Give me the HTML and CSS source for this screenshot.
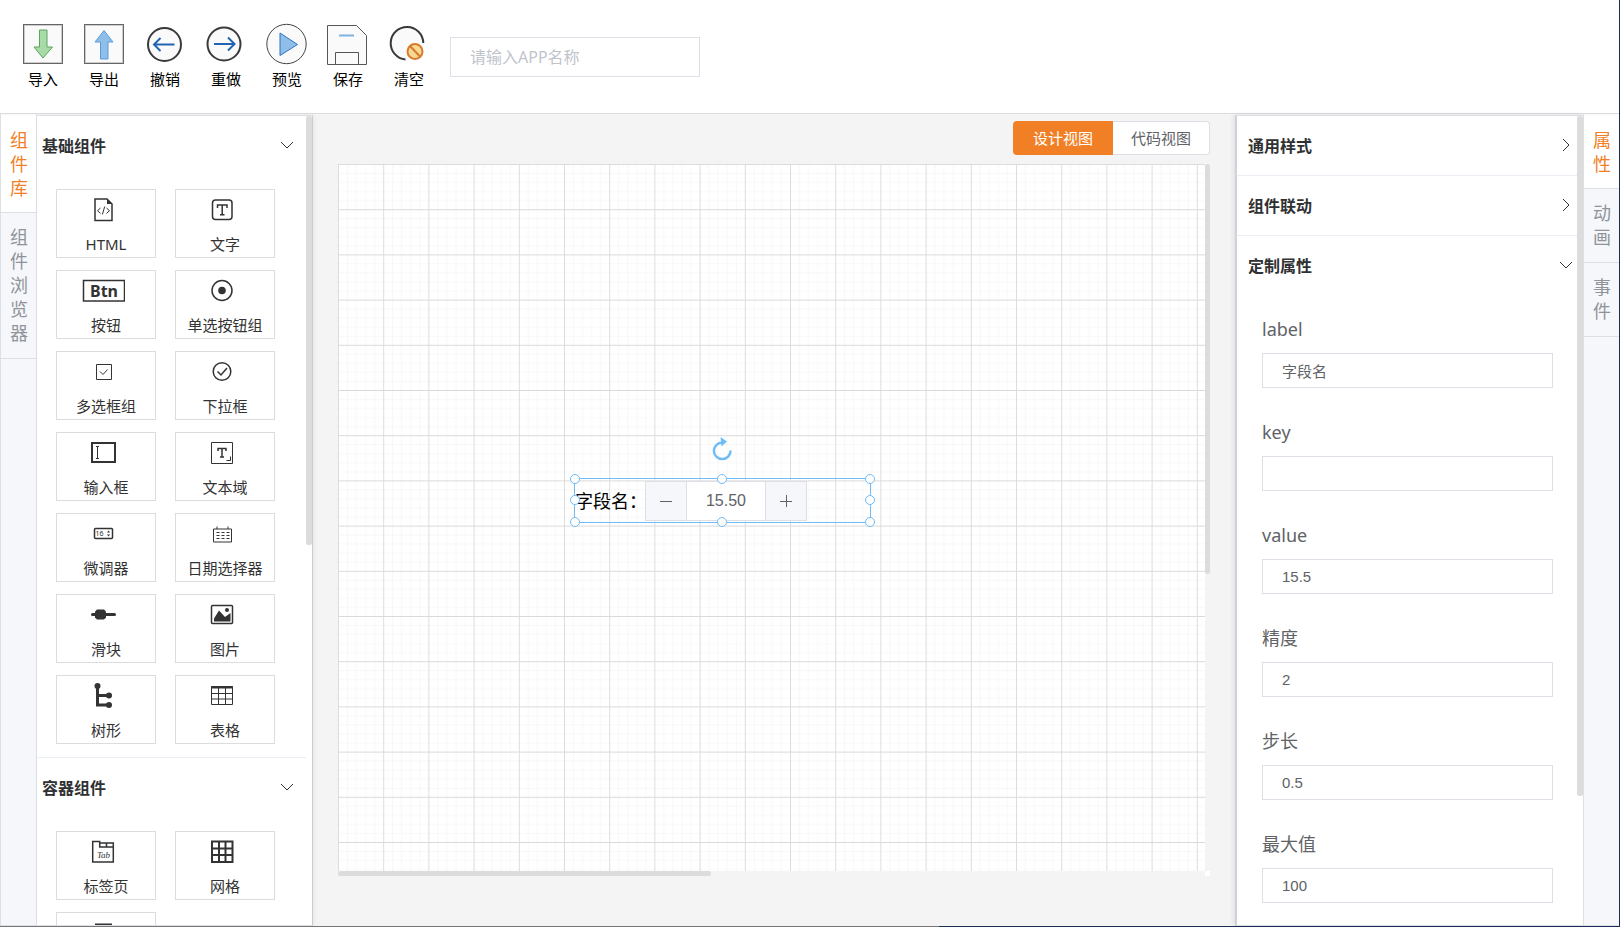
FILE: index.html
```html
<!DOCTYPE html>
<html lang="zh-CN">
<head>
<meta charset="utf-8">
<title>设计器</title>
<link rel="stylesheet" href="styles.css">
</head>
<body>
<div class="app">
  <header class="topbar">
    <nav class="tools">
      <button class="tool"><svg viewBox="0 0 42 42"><rect x="1.500" y="1.500" width="39" height="39" fill="#fafafa" stroke="#666"/><rect x="2.500" y="2.500" width="37" height="37" fill="none" stroke="#ccc"/><path d="M17.500 7h7.500v17h5.500L21 35l-9-11h5.500z" fill="#a9dba9" stroke="#58a75c"/></svg>导入</button>
      <button class="tool"><svg viewBox="0 0 42 42"><rect x="1.500" y="1.500" width="39" height="39" fill="#fafafa" stroke="#666"/><rect x="2.500" y="2.500" width="37" height="37" fill="none" stroke="#ccc"/><path d="M17.500 36h7.500V19h5L21 7.500 12 19h5.500z" fill="#8fbfe8" stroke="#5b9bd9"/></svg>导出</button>
      <button class="tool"><svg viewBox="0 0 42 42"><circle cx="20.500" cy="21.500" r="16.500" fill="#fafafa" stroke="#3a3a3a" stroke-width="2"/><path d="M30.500 21.500h-20M16.500 15L10 21.500l6.500 6.500" fill="none" stroke="#2264b4" stroke-width="2"/></svg>撤销</button>
      <button class="tool"><svg viewBox="0 0 42 42"><circle cx="19" cy="21" r="16.500" fill="#fafafa" stroke="#3a3a3a" stroke-width="2"/><path d="M9 21h20M23 14.500l6.500 6.500-6.500 6.500" fill="none" stroke="#2264b4" stroke-width="2"/></svg>重做</button>
      <button class="tool"><svg viewBox="0 0 42 42"><circle cx="20.500" cy="21" r="19.700" fill="#fafafa" stroke="#444"/><path d="M14 10v22.500L31.500 21.500z" fill="#8fbfe8" stroke="#2f73bd"/></svg>预览</button>
      <button class="tool"><svg viewBox="0 0 42 42"><path d="M.5 2.500h29l10 10v29H.5z" fill="#fafafa" stroke="#555"/><path d="M12 12.500h15" stroke="#7fb2e0" stroke-width="2"/><path d="M8.500 41V29.500h23V41" fill="none" stroke="#555"/></svg>保存</button>
      <button class="tool"><svg viewBox="0 0 42 42"><path d="M17.500 36.500A16.300 16.300 0 1 1 35.300 20" fill="#fafafa" stroke="#3a3a3a" stroke-width="2"/><circle cx="27" cy="28.500" r="9.500" fill="#fff"/><circle cx="27" cy="28.500" r="7.500" fill="#f6da94" stroke="#d97a2b" stroke-width="2"/><path d="M22 23l10.500 11" stroke="#d97a2b" stroke-width="2"/></svg>清空</button>
    </nav>
    <input class="app-name" type="text" placeholder="请输入APP名称" aria-label="APP名称">
  </header>

  <main class="workspace">
    <div class="rail rail-left">
      <button class="rail-tab active">组件库</button>
      <button class="rail-tab">组件浏览器</button>
    </div>

    <aside class="panel panel-left">
      <div class="panel-body">
        <section class="group">
          <button class="group-head">基础组件<svg class="chev" viewBox="0 0 14 14"><path d="M1 4l6 6 6-6"/></svg></button>
          <div class="cards">
            <button class="card"><svg viewBox="0 0 44 28"><path d="M14 3h12l5 5v16.500H14z"/><path d="M26 3v5h5z" class="f"/><path d="M19.500 12l-3 2.700 3 2.700M25.500 12l3 2.700-3 2.700M23.700 10.500l-2.300 8" class="thin"/></svg>HTML</button>
            <button class="card"><svg viewBox="0 0 44 28"><rect x="12.500" y="4" width="19.500" height="19.500" rx="3"/><path d="M17.500 12V9h9.500v3M22.200 9v9.500M20 18.700h4.500"/></svg>文字</button>
            <button class="card"><svg viewBox="0 0 44 28"><rect x="2.500" y="3.500" width="41" height="20.500"/><text x="23" y="19.500" class="btn-text">Btn</text></svg>按钮</button>
            <button class="card"><svg viewBox="0 0 44 28"><circle cx="22" cy="13.500" r="10"/><circle cx="22" cy="13.500" r="3.800" class="f"/></svg>单选按钮组</button>
            <button class="card"><svg viewBox="0 0 44 28"><path d="M15.500 6.500h15v15h-15z" class="thin"/><path d="M19 13.500l3 3 4.500-5" class="thin"/></svg>多选框组</button>
            <button class="card"><svg viewBox="0 0 44 28"><circle cx="22" cy="13.500" r="8.800"/><path d="M17.500 13.500l3.500 3.500 6-7"/></svg>下拉框</button>
            <button class="card"><svg viewBox="0 0 44 28"><rect x="11" y="4" width="23" height="19" class="bold"/><path d="M15 7.500h3M16.500 7.500v12M15 19.500h3" class="thin"/></svg>输入框</button>
            <button class="card"><svg viewBox="0 0 44 28"><path d="M11.500 3.500h21v21h-21z" class="thin"/><path d="M18 12V9.500h8V12M22 9.500V18M20 18h4"/><path d="M30.500 17.500v4h-4" class="thin"/></svg>文本域</button>
            <button class="card"><svg viewBox="0 0 44 28"><rect x="13.500" y="8.500" width="18" height="10" rx="1"/><text x="18.500" y="16" class="tiny-text">16</text><path d="M26 12.500l1.500-2 1.500 2zM26 14.500l1.500 2 1.500-2z" class="f"/></svg>微调器</button>
            <button class="card"><svg viewBox="0 0 44 28"><path d="M13.500 9h18v13h-18zM17 6.500V9M28 6.500V9" class="thin"/><path d="M16.500 12.500h3m2 0h3m2 0h3M16.500 15.500h3m2 0h3m2 0h3M16.500 18.500h3m2 0h3m2 0h3" class="thin"/></svg>日期选择器</button>
            <button class="card"><svg viewBox="0 0 44 28"><path d="M11.500 13.500h22" class="thick"/><path d="M16 8.500h7l2 2v6l-2 2h-7l-2-2v-6z" class="f"/></svg>滑块</button>
            <button class="card"><svg viewBox="0 0 44 28"><rect x="11.500" y="4.500" width="21" height="18" rx="1"/><path d="M14 20.500v-3l5-8 6 6.500 5.500-4v8.500z" class="f"/><circle cx="27" cy="9" r="2" class="f"/></svg>图片</button>
            <button class="card"><svg viewBox="0 0 44 28"><path d="M16.500 4v19h11M16.500 13.500h11" class="thick"/><circle cx="16.500" cy="4" r="3" class="f"/><circle cx="28" cy="13.500" r="3" class="f"/><circle cx="28" cy="23" r="3" class="f"/></svg>树形</button>
            <button class="card"><svg viewBox="0 0 44 28"><path d="M11.500 4.500h21v18h-21zM11.500 11.500h21M11.500 17h21M18.500 5v17.500M25.500 5v17.500" class="thin"/><path d="M11 5.500h22" class="bold"/></svg>表格</button>
          </div>
        </section>
        <section class="group">
          <button class="group-head">容器组件<svg class="chev" viewBox="0 0 14 14"><path d="M1 4l6 6 6-6"/></svg></button>
          <div class="cards">
            <button class="card"><svg viewBox="0 0 44 28"><path d="M11.700 24V3.500h7V9h13.600v15zM18.500 5h13.800v4M25.500 5v4"/><text x="22.500" y="20" class="tab-text">Tab</text></svg>标签页</button>
            <button class="card"><svg viewBox="0 0 44 28"><path d="M12 3.500h20.500V24H12zM12 10.500h20.500M12 17h20.500M19 3.500V24M25.500 3.500V24" class="bold"/></svg>网格</button>
            <button class="card" aria-label="卡片"><svg viewBox="0 0 44 28"><path d="M15 5.500h15v16H15z" class="bold"/></svg></button>
          </div>
        </section>
      </div>
      <div class="scroll"><div class="thumb thumb-left"></div></div>
    </aside>

    <section class="stage">
      <div class="views">
        <button class="view active">设计视图</button>
        <button class="view">代码视图</button>
      </div>
      <div class="canvas">
        <div class="board">
          <svg class="grid" width="100%" height="100%">
            <defs>
              <pattern id="minor" width="10" height="10" patternUnits="userSpaceOnUse"><path d="M10 0H0v10" fill="none" stroke="#efefef" stroke-width="1"/></pattern>
              <pattern id="major" width="50" height="50" patternUnits="userSpaceOnUse" patternTransform="scale(.904)"><rect width="50" height="50" fill="url(#minor)"/><path d="M50 0H0v50" fill="none" stroke="#dadada" stroke-width="2"/></pattern>
            </defs>
            <rect width="100%" height="100%" fill="url(#major)"/>
          </svg>
          <div class="node">
            <label class="node-label" for="num">字段名：</label>
            <div class="stepper">
              <button aria-label="减少"><svg viewBox="0 0 14 14"><path d="M1 7.500h12"/></svg></button>
              <input id="num" type="text" value="15.50">
              <button aria-label="增加"><svg viewBox="0 0 14 14"><path d="M1 7.500h12M7.500 1v12"/></svg></button>
            </div>
            <svg class="rotate" viewBox="0 0 22 26"><path d="M11.500 6.500A8.300 8.300 0 1 0 19.500 14.500" fill="none" stroke="#6fbcf7" stroke-width="2.500"/><path d="M9.500 1l6.500 4.500-5.500 5z" fill="#6fbcf7"/></svg>
            <i class="handle t l"></i><i class="handle t c"></i><i class="handle t r"></i>
            <i class="handle m l"></i><i class="handle m r"></i>
            <i class="handle b l"></i><i class="handle b c"></i><i class="handle b r"></i>
          </div>
        </div>
        <div class="vbar"><div class="thumb thumb-v"></div></div>
        <div class="hbar"><div class="thumb thumb-h"></div></div>
        <div class="corner"></div>
      </div>
    </section>

    <aside class="panel panel-right">
      <div class="panel-body">
        <section class="group"><button class="group-head">通用样式<svg class="chev" viewBox="0 0 14 14"><path d="M4 1l6 6-6 6"/></svg></button></section>
        <section class="group"><button class="group-head">组件联动<svg class="chev" viewBox="0 0 14 14"><path d="M4 1l6 6-6 6"/></svg></button></section>
        <section class="group">
          <button class="group-head">定制属性<svg class="chev" viewBox="0 0 14 14"><path d="M1 4l6 6 6-6"/></svg></button>
          <form class="fields">
            <div class="field"><label for="f1">label</label><input id="f1" type="text" value="字段名"></div>
            <div class="field"><label for="f2">key</label><input id="f2" type="text"></div>
            <div class="field"><label for="f3">value</label><input id="f3" type="text" value="15.5"></div>
            <div class="field"><label for="f4">精度</label><input id="f4" type="text" value="2"></div>
            <div class="field"><label for="f5">步长</label><input id="f5" type="text" value="0.5"></div>
            <div class="field"><label for="f6">最大值</label><input id="f6" type="text" value="100"></div>
          </form>
        </section>
      </div>
      <div class="scroll"><div class="thumb thumb-right"></div></div>
    </aside>

    <div class="rail rail-right">
      <button class="rail-tab active">属性</button>
      <button class="rail-tab">动画</button>
      <button class="rail-tab">事件</button>
    </div>
  </main>
</div>
</body>
</html>
```
FILE: styles.css
```css
* { box-sizing: border-box; }
body {
  margin: 0;
  font-family: "Noto Sans", "Noto Sans CJK SC", sans-serif;
  color: #303133;
  background: #fff;
}
button { font: inherit; color: inherit; background: none; border: 0; padding: 0; cursor: pointer; }
input { font-family: "Liberation Sans", "Noto Sans CJK SC", sans-serif; outline: 0; }

.app {
  height: 100vh;
  display: flex;
  flex-direction: column;
  overflow: hidden;
  border-right: 1px solid #1b2d52;
}
.app::after {
  content: "";
  flex: none;
  height: 1px;
  background: linear-gradient(90deg, #777 58%, #1b2d52 58%);
}

.topbar {
  flex: none;
  display: flex;
  height: 114px;
  padding-left: 22px;
  border-bottom: 1px solid #dcdcdc;
}
.tools { display: flex; gap: 19px; padding-top: 23px; }
.tool {
  display: flex;
  flex-direction: column;
  align-items: center;
  align-self: flex-start;
  gap: 2px;
  width: 42px;
  font-size: 15px;
  line-height: 24px;
  color: #000;
}
.tool svg { width: 42px; height: 42px; }
.app-name {
  width: 250px;
  height: 40px;
  margin: 37px 0 0 20px;
  padding: 0 19px;
  border: 1px solid #dcdfe6;
  font-family: "Noto Sans", "Noto Sans CJK SC", sans-serif;
  font-size: 16px;
}
.app-name::placeholder { color: #c0c4cc; }

.workspace { flex: 1; min-height: 0; display: flex; background: #f4f4f4; }

.rail {
  flex: none;
  width: 37px;
  padding-top: 1px;
  background: #f5f7fa;
  border: solid #dcdfe6;
  border-width: 0 1px 1px;
}
.rail-right { width: 36px; border-right: 0; }
.rail-tab {
  display: block;
  width: 100%;
  padding: 12px 8px 13px 9px;
  border-bottom: 1px solid #dcdfe6;
  font-size: 18px;
  line-height: 24px;
  text-align: left;
  color: #909399;
}
.rail-tab.active { padding-top: 13px; padding-bottom: 12px; background: #fff; color: #f17f26; }

.panel {
  flex: none;
  display: flex;
  background: #fff;
  border-top: 1px solid #dcdfe6;
  border-bottom: 1px solid #dcdfe6;
  margin-top: 1px;
}
.panel-left { width: 276px; border-right: 1px solid #ccc; box-shadow: 2px 0 4px rgba(0,0,0,.04); }
.panel-right { width: 348px; border-left: 2px solid #d0d2da; box-shadow: -2px 0 5px rgba(0,0,0,.08); }
.panel-body { flex: 1; min-width: 0; overflow: hidden; }
.scroll { flex: none; width: 6px; }
.thumb { background: #dcdcdc; border-radius: 2px; }
.thumb-left { height: 53%; }
.thumb-right { height: 84%; }

.group { border-bottom: 1px solid #ebeef5; }
.group:last-child { border-bottom: 0; }
.group-head {
  display: flex;
  width: 100%;
  height: 59px;
  align-items: center;
  justify-content: space-between;
  padding: 0 12px 2px 5px;
  font-size: 16px;
  font-weight: 700;
}
.panel-right .group-head { padding: 0 4px 2px 11px; }
.chev { width: 14px; height: 14px; fill: none; stroke: #303133; stroke-width: 1; }

.cards {
  display: grid;
  grid-template-columns: 100px 100px;
  gap: 12px 19px;
  padding: 14px 0 13px 19px;
}
.card {
  display: flex;
  flex-direction: column;
  align-items: center;
  gap: 8px;
  height: 69px;
  padding-top: 6px;
  border: 1px solid #dcdcdc;
  font-size: 15px;
  line-height: 24px;
  color: #333;
}
.card svg {
  flex: none;
  width: 44px;
  height: 28px;
  margin-right: 6px;
  fill: none;
  stroke: #333;
  stroke-width: 1.5;
}
.card .thin { stroke-width: 1; }
.card .bold { stroke-width: 2; }
.card .thick { stroke-width: 3; stroke-linecap: round; }
.card .f { fill: #333; stroke: none; }
.card text { fill: #333; stroke: none; text-anchor: middle; }
.btn-text { font-size: 16px; font-weight: 700; }
.tiny-text { font-size: 7px; }
.tab-text { font: italic 9px "Liberation Serif", serif; }

.stage {
  flex: 1;
  min-width: 0;
  display: flex;
  flex-direction: column;
  padding: 7px 25px 50px;
}
.views { display: flex; justify-content: flex-end; margin-bottom: 9px; }
.view {
  height: 34px;
  padding: 0 18px 2px;
  background: #fff;
  border: 1px solid #dcdfe6;
  border-left: 0;
  border-radius: 0 4px 4px 0;
  font-size: 15px;
  color: #606266;
}
.view.active {
  padding: 0 20px 2px;
  background: #f17f26;
  border: 0;
  border-radius: 4px 0 0 4px;
  color: #fff;
}
.canvas {
  flex: 1;
  min-height: 0;
  display: grid;
  grid-template: 1fr 5px / 1fr 5px;
}
.board {
  position: relative;
  overflow: hidden;
  background: #fff;
  border-left: 1px solid #dcdcdc;
  border-top: 1px solid #dcdcdc;
}
.grid { display: block; margin: -1px; width: calc(100% + 1px); height: calc(100% + 1px); }
.thumb-v { height: 58%; }
.thumb-h { width: 43%; height: 5px; }
.corner { background: #fff; }

.node {
  position: absolute;
  left: 235px;
  top: 313px;
  width: 297px;
  height: 45px;
  display: flex;
  align-items: center;
  border: 1px solid #6fbcf7;
}
.node-label { flex: none; width: 70px; font-size: 18px; line-height: 24px; white-space: nowrap; color: #000; }
.stepper { flex: none; display: flex; width: 162px; height: 40px; border: 1px solid #dcdfe6; background: #f5f7fa; }
.stepper button { flex: none; width: 40px; display: flex; align-items: center; justify-content: center; }
.stepper button svg { width: 14px; height: 14px; fill: none; stroke: #606266; }
.stepper input {
  flex: 1;
  min-width: 0;
  border: solid #dcdfe6;
  border-width: 0 1px;
  text-align: center;
  font-size: 16px;
  color: #606266;
}
.rotate { position: absolute; left: 136px; top: -43px; width: 22px; height: 26px; }
.handle {
  position: absolute;
  width: 10px;
  height: 10px;
  border: 1px solid #6fbcf7;
  border-radius: 50%;
  background: #fff;
}
.t { top: -5px; }
.m { top: 16px; }
.b { bottom: -5px; }
.l { left: -5px; }
.c { left: 142px; }
.r { right: -5px; }

.fields { padding: 10px 24px 0 25px; }
.field { margin-bottom: 20px; }
.field label { display: block; font-size: 18px; line-height: 48px; color: #606266; }
.field input {
  display: block;
  width: 100%;
  height: 35px;
  padding: 0 19px;
  border: 1px solid #dcdfe6;
  font-size: 15px;
  color: #606266;
}
```
